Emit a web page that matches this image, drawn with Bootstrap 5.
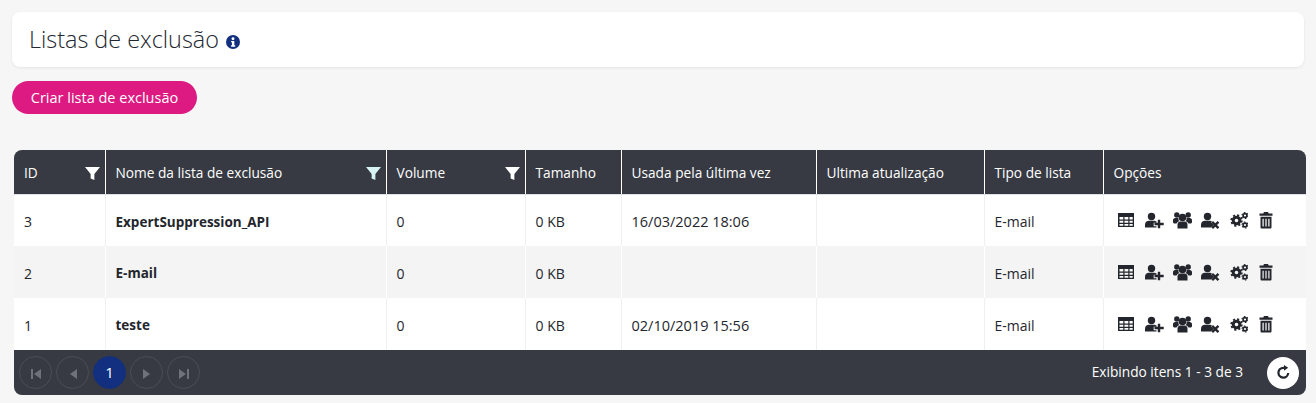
<!DOCTYPE html>
<html lang="pt">
<head>
    <meta charset="UTF-8">
    <meta name="viewport" content="width=device-width, initial-scale=1.0">
    <title>Listas de exclusão</title>
    <link href="https://cdn.jsdelivr.net/npm/bootstrap@5.3.0/dist/css/bootstrap.min.css" rel="stylesheet">

    <style>
        body {
            background: #f6f6f6;
            font-family: "Open Sans", "Noto Sans", sans-serif;
            font-size: 13.7px;
            color: #23262d;
            height: 403px;
            overflow: hidden;
            padding: 12px 10px 0 12px;
        }

        /* Cabecalho */
        .head-box {
            height: 55px;
            margin-right: 2px;
            background: #fff;
            border-radius: 8px;
            box-shadow: 0 1px 3px rgba(0, 0, 0, 0.08);
            padding-left: 17px;
        }
        .head-title {
            font-size: 23.4px;
            font-weight: 300;
            color: #23272f;
            margin: 0;
        }
        .info-ico { width: 14px; height: 14px; margin-left: 7px; margin-top: 4px; }

        .btn-criar {
            height: 33px;
            width: 185px;
            margin-top: 14px;
            padding: 0;
            border: 0;
            border-radius: 17px;
            background: #dc1a82;
            color: #fff;
            font-size: 14.5px;
        }

        /* Tabela */
        .grid-wrap {
            margin: 36px 0 0 2px;
            width: 1292px;
            border-radius: 8px;
            overflow: hidden;
        }
        .grid-table { table-layout: fixed; width: 1292px; margin: 0; }
        .grid-table th {
            height: 44px;
            background: #373a42;
            color: #fff;
            font-weight: 400;
            padding: 3px 10px 0;
            border-right: 1px solid #fff;
            vertical-align: middle;
        }
        .grid-table th:last-child { border-right: 0; }
        .grid-table th.has-filter { padding-right: 5px; }
        .grid-table td {
            height: 52px;
            padding: 3px 10px 0;
            border-right: 1px solid #f0f0f0;
            border-bottom: 0;
            vertical-align: middle;
            background: #fff;
            color: #23262d;
            font-size: 14px;
        }
        .grid-table td:last-child { border-right: 0; padding-top: 0; }
        .grid-table td.fw-bold { font-size: 13.5px; }
        .grid-table td.cell-data { font-size: 14.5px; }
        .grid-table tr.alt-row td { background: #f4f4f4; border-right-color: #fff; }
        .filter-ico { width: 15px; height: 15px; }
        .opt-list { margin-left: 2px; gap: 8px; }
        .opt-ico { width: 20px; height: 18px; fill: #23262d; stroke: none; flex: none; }

        /* Rodape */
        .grid-foot {
            height: 45px;
            background: #373a42;
            color: #fff;
            padding: 0 7px 0 5px;
        }
        .pg-btn {
            width: 33px;
            height: 33px;
            border-radius: 50%;
            border: 1px solid #4b4e56;
            background: transparent;
            padding: 0;
        }
        .pg-btn.is-on { background: #12307f; border-color: #12307f; color: #fff; font-size: 15px; }
        .pg-btn svg { width: 12px; height: 12px; fill: #6f7278; }
        .reload-btn {
            width: 32px;
            height: 32px;
            border-radius: 50%;
            background: #fff;
            border: 0;
            padding: 0;
        }
        .reload-btn svg { width: 15px; height: 15px; }
    </style>
</head>
<body>

    <!-- Titulo -->
    <div class="head-box d-flex align-items-center">
        <h1 class="head-title">Listas de exclusão</h1>
        <svg class="info-ico" viewBox="0 0 16 16"><circle cx="8" cy="8" r="8" fill="#12307f"/><circle cx="8" cy="4.2" r="1.7" fill="#fff"/><path d="M5.8 6.8h3.7v5h1v1.6H5.8v-1.6h1v-3.4h-1z" fill="#fff"/></svg>
    </div>

    <button class="btn btn-criar d-block" type="button">Criar lista de exclusão</button>

    <!-- Grid -->
    <div class="grid-wrap">
        <table class="table grid-table">
            <thead>
                <tr>
                    <th class="has-filter" style="width:91px"><div class="d-flex justify-content-between align-items-center">ID <svg class="filter-ico" viewBox="0 0 16 16"><path d="M0 1h16L10 8.500V15l-4-1.800V8.500z" fill="#fff"/></svg></div></th>
                    <th class="has-filter" style="width:281px"><div class="d-flex justify-content-between align-items-center">Nome da lista de exclusão <svg class="filter-ico" viewBox="0 0 16 16"><path d="M0 1h16L10 8.500V15l-4-1.800V8.500z" fill="#d8f3f3"/></svg></div></th>
                    <th class="has-filter" style="width:139px"><div class="d-flex justify-content-between align-items-center">Volume <svg class="filter-ico" viewBox="0 0 16 16"><path d="M0 1h16L10 8.500V15l-4-1.800V8.500z" fill="#fff"/></svg></div></th>
                    <th style="width:96px">Tamanho</th>
                    <th style="width:195px">Usada pela última vez</th>
                    <th style="width:168px">Ultima atualização</th>
                    <th style="width:119px">Tipo de lista</th>
                    <th>Opções</th>
                </tr>
            </thead>
            <tbody id="linhas"></tbody>
        </table>
        <div class="grid-foot d-flex align-items-center justify-content-between">
            <div class="d-flex align-items-center gap-1">
                <button class="pg-btn" type="button"><svg viewBox="0 0 12 12"><path d="M1 1h2v10H1zM11 1v10L4 6z"/></svg></button>
                <button class="pg-btn" type="button"><svg viewBox="0 0 12 12"><path d="M10 1v10L3 6z"/></svg></button>
                <button class="pg-btn is-on" type="button">1</button>
                <button class="pg-btn" type="button"><svg viewBox="0 0 12 12"><path d="M2 1v10l7-5z"/></svg></button>
                <button class="pg-btn" type="button"><svg viewBox="0 0 12 12"><path d="M9 1h2v10H9zM1 1v10l7-5z"/></svg></button>
            </div>
            <div class="d-flex align-items-center gap-4">
                <span>Exibindo itens 1 - 3 de 3</span>
                <button class="reload-btn d-flex align-items-center justify-content-center" type="button"><svg viewBox="0 0 16 16"><path d="M13 8.500A5.200 5.200 0 1 1 8 3h1.500" fill="none" stroke="#23262d" stroke-width="2.400"/><path d="M8.500 0l4.500 3-4.500 3z" fill="#23262d"/></svg></button>
            </div>
        </div>
    </div>

    <script>
        const icones = `
            <svg class="opt-ico" viewBox="0 0 20 18"><path fill-rule="evenodd" d="M2 2h16v14H2zM3.500 6v2.500h3.800V6zm5 0v2.500h3.800V6zm5 0v2.500h3.200V6zM3.500 9.700v2h3.800v-2zm5 0v2h3.800v-2zm5 0v2h3.200v-2zM3.500 13v1.700h3.800V13zm5 0v1.700h3.800V13zm5 0v1.700h3.200V13z"/></svg>
            <svg class="opt-ico" viewBox="0 0 20 18"><circle cx="7.500" cy="5.500" r="3.700"/><path d="M1 16.500v-2.700c0-2.500 1.800-4 4-4h5c1 0 1.900.3 2.500.8v1.100H9.700v3.500h2.800v1.300z"/><path d="M13.800 8.800h2.400v3h3.500v2.400h-3.500v3h-2.400v-3h-3.300v-2.400h3.300z"/></svg>
            <svg class="opt-ico" viewBox="-1 0 20 18"><circle cx="9.500" cy="6.500" r="3.800"/><circle cx="3.800" cy="4" r="2.700"/><circle cx="15.200" cy="4" r="2.700"/><path d="M4.500 17.500v-4c0-2 1.500-3 3-3h4c1.500 0 3 1 3 3v4z"/><path d="M0 11.500V9.200C0 8 1 7 2.200 7h3.300c-.3 1.500.2 2.500 1 3.300-1.300.4-2.500 1-3 2.200H1zM19 11.500V9.200C19 8 18 7 16.800 7h-3.300c.3 1.500-.2 2.500-1 3.300 1.300.4 2.500 1 3 2.200h2.500z"/></svg>
            <svg class="opt-ico" viewBox="0 0 20 18"><circle cx="7.500" cy="5.500" r="3.700"/><path d="M1 16.500v-2.700c0-2.500 1.800-4 4-4h5c.8 0 1.500.2 2 .5l-1 1 2.700 2.700-2.700 2.500z"/><path d="M13 10l2.300 2.300 2.300-2.300 1.700 1.700-2.300 2.300 2.300 2.300-1.700 1.700-2.300-2.300-2.300 2.300-1.700-1.700 2.300-2.300-2.300-2.300z"/></svg>
            <svg class="opt-ico" viewBox="-2.500 0 20 18">
                <circle cx="6" cy="9.500" r="3.300" fill="none" stroke="#23262d" stroke-width="3"/>
                <circle cx="6" cy="9.500" r="5.300" fill="none" stroke="#23262d" stroke-width="1.800" stroke-dasharray="2.080 2.080"/>
                <circle cx="14.500" cy="4.500" r="1.900" fill="none" stroke="#23262d" stroke-width="1.600"/>
                <circle cx="14.500" cy="4.500" r="3" fill="none" stroke="#23262d" stroke-width="1.100" stroke-dasharray="1.570 1.570"/>
                <circle cx="14.500" cy="14" r="1.900" fill="none" stroke="#23262d" stroke-width="1.600"/>
                <circle cx="14.500" cy="14" r="3" fill="none" stroke="#23262d" stroke-width="1.100" stroke-dasharray="1.570 1.570"/>
            </svg>
            <svg class="opt-ico" viewBox="0 0 20 18"><path d="M8 1h4l.7 1.500H16.500V4.800h-13V2.500h3.800z"/><path fill-rule="evenodd" d="M4.500 5.800h11v10.700a1 1 0 0 1-1 1h-9a1 1 0 0 1-1-1zm2 2v7.700h1.200V7.800zm2.900 0v7.700h1.200V7.800zm2.900 0v7.700h1.200V7.800z"/></svg>`;

        const dados = [
            { id: 3, nome: "ExpertSuppression_API", data: "16/03/2022 18:06" },
            { id: 2, nome: "E-mail", data: "" },
            { id: 1, nome: "teste", data: "02/10/2019 15:56" }
        ];

        document.getElementById("linhas").innerHTML = dados.map((d, i) => `
            <tr class="${i === 1 ? "alt-row" : ""}">
                <td>${d.id}</td>
                <td class="fw-bold">${d.nome}</td>
                <td>0</td>
                <td>0 KB</td>
                <td class="cell-data">${d.data}</td>
                <td></td>
                <td>E-mail</td>
                <td><div class="d-flex align-items-center opt-list">${icones}</div></td>
            </tr>`).join("");
    </script>

    <script src="https://cdn.jsdelivr.net/npm/bootstrap@5.3.0/dist/js/bootstrap.bundle.min.js"></script>

</body>
</html>
